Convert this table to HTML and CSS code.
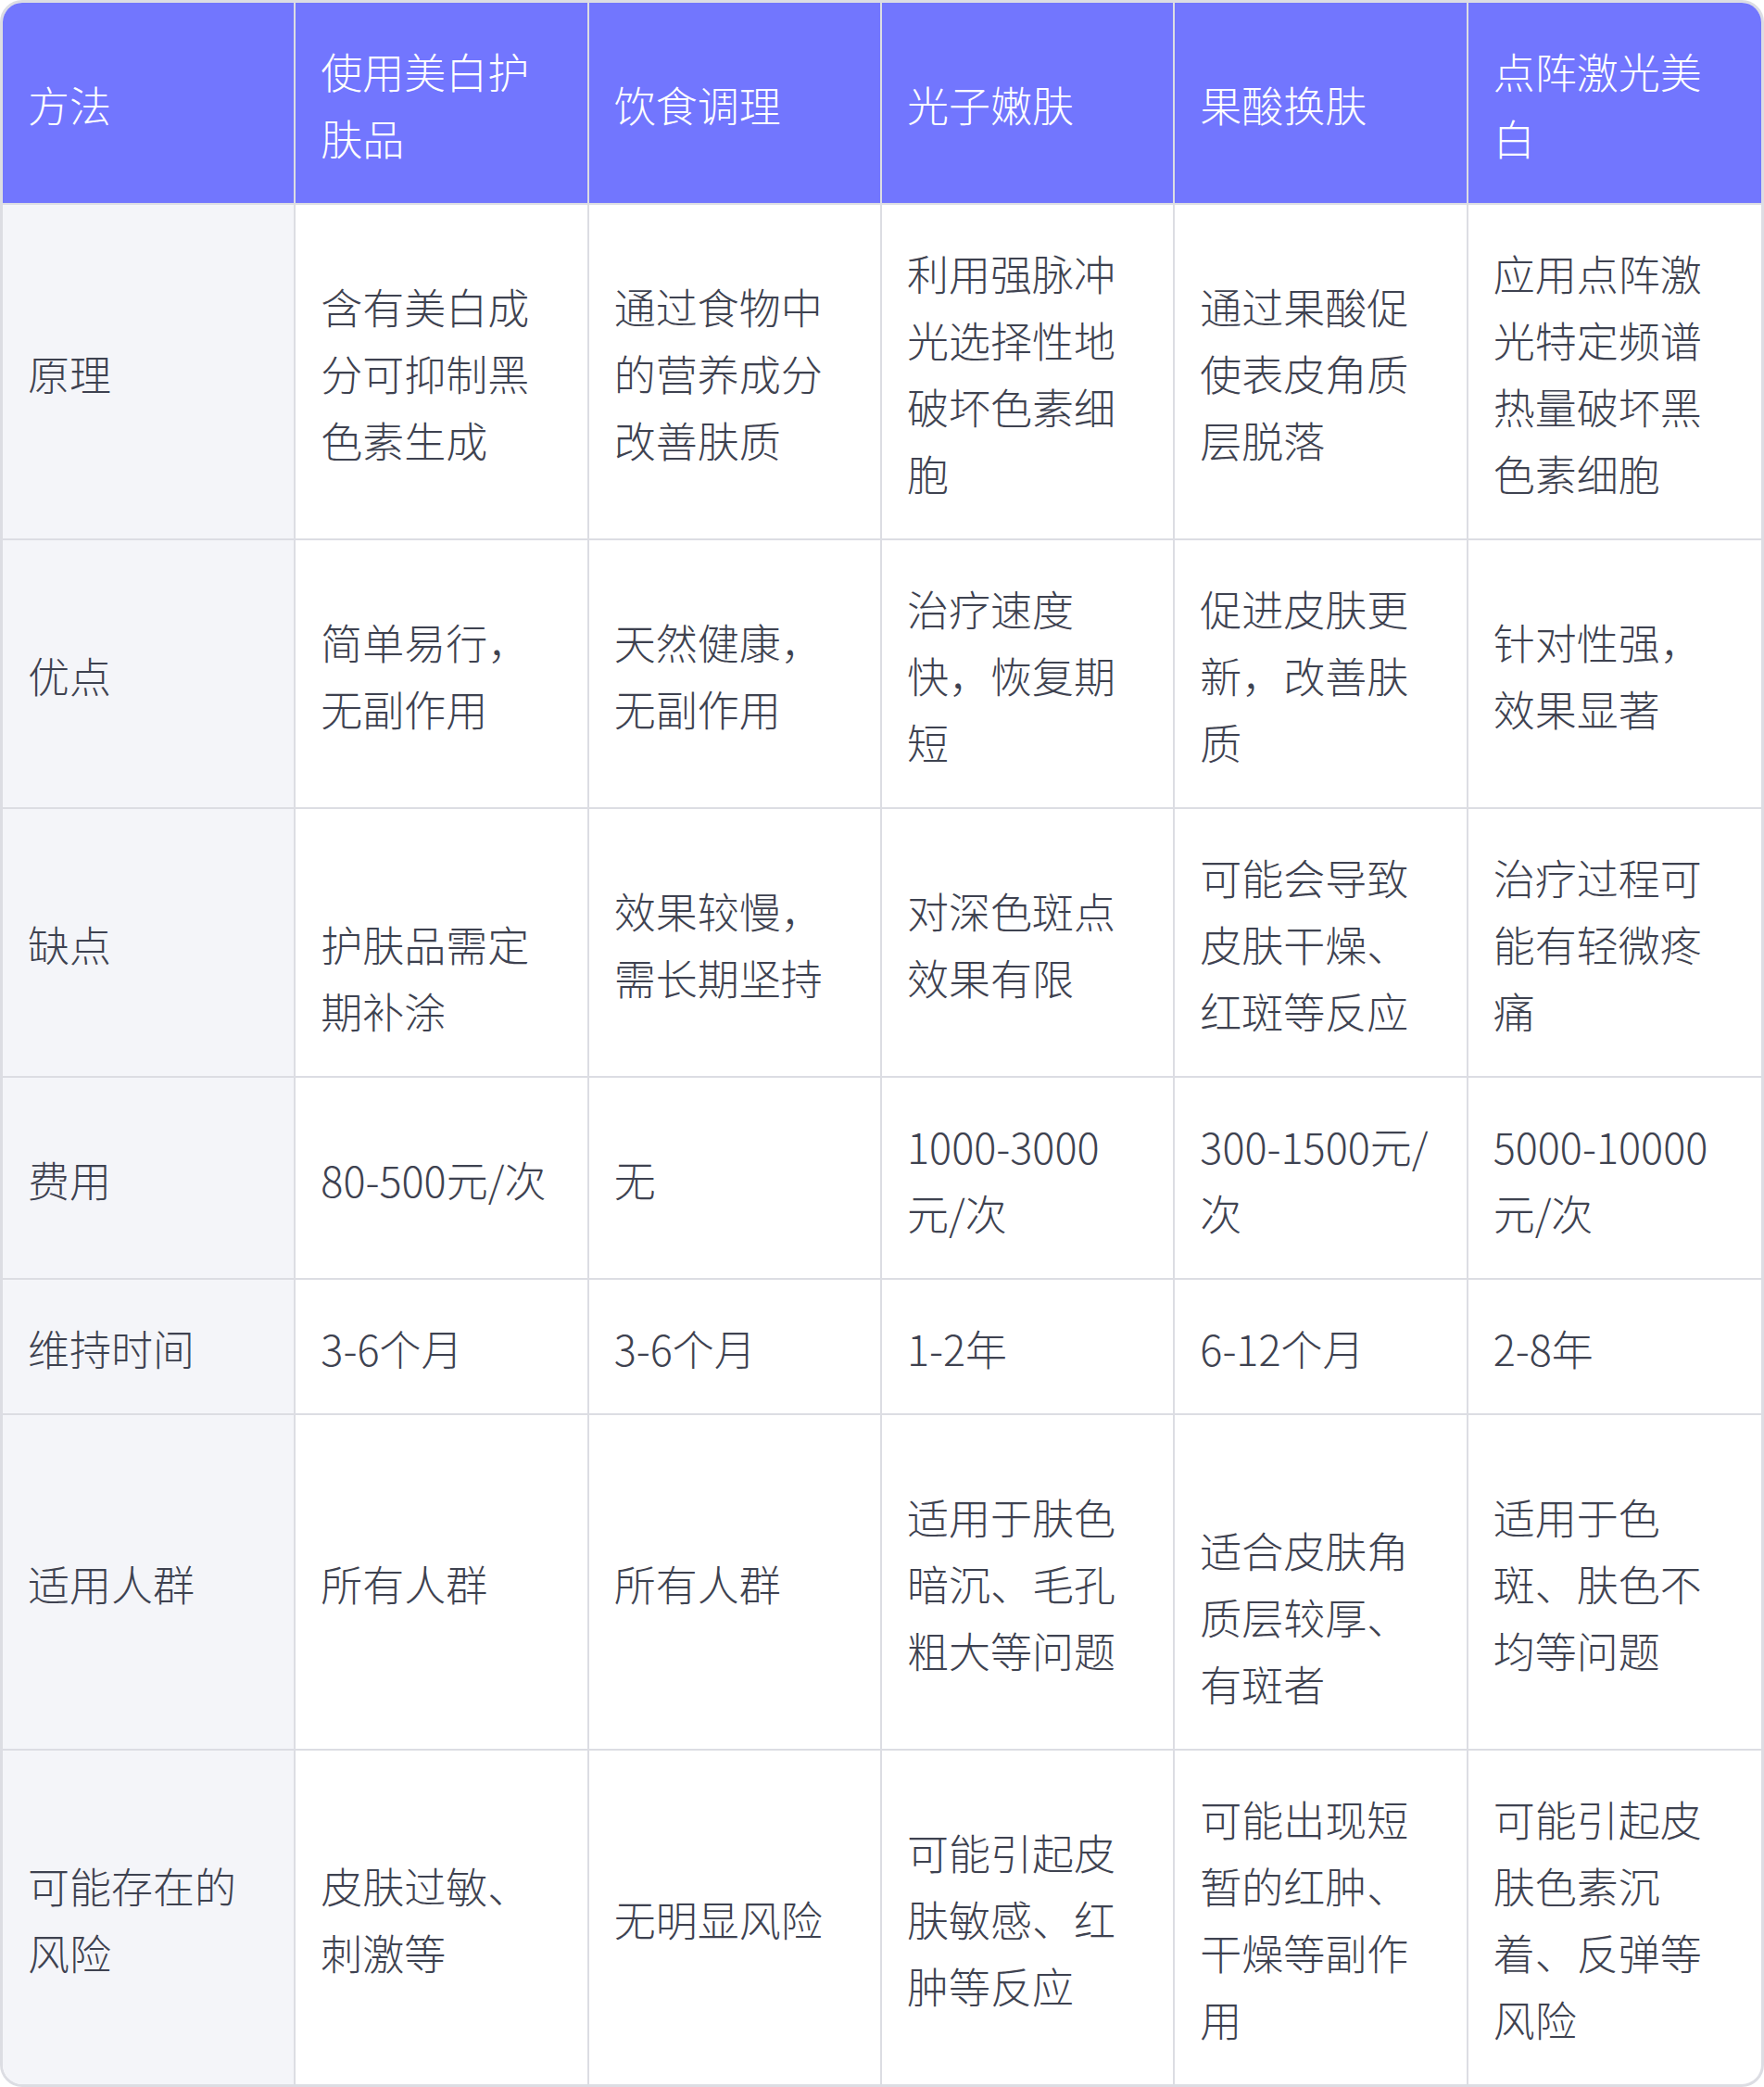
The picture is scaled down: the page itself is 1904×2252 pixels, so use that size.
FILE: index.html
```
<!DOCTYPE html>
<html lang="zh-CN">
<head>
<meta charset="utf-8">
<title>美白方法对比</title>
<link rel="stylesheet" href="styles.css">
</head>
<body>
<div class="card">
  <table class="compare">
    <thead>
      <tr>
        <th>方法</th>
        <th>使用美白护肤品</th>
        <th>饮食调理</th>
        <th>光子嫩肤</th>
        <th>果酸换肤</th>
        <th>点阵激光美白</th>
      </tr>
    </thead>
    <tbody>
      <tr>
        <td class="label">原理</td>
        <td>含有美白成分可抑制黑色素生成</td>
        <td>通过食物中的营养成分改善肤质</td>
        <td>利用强脉冲光选择性地破坏色素细胞</td>
        <td>通过果酸促使表皮角质层脱落</td>
        <td>应用点阵激光特定频谱热量破坏黑色素细胞</td>
      </tr>
      <tr>
        <td class="label">优点</td>
        <td>简单易行，无副作用</td>
        <td>天然健康，无副作用</td>
        <td>治疗速度快，恢复期短</td>
        <td>促进皮肤更新，改善肤质</td>
        <td>针对性强，效果显著</td>
      </tr>
      <tr>
        <td class="label">缺点</td>
        <td class="lead">护肤品需定期补涂</td>
        <td>效果较慢，需长期坚持</td>
        <td>对深色斑点效果有限</td>
        <td>可能会导致皮肤干燥、红斑等反应</td>
        <td>治疗过程可能有轻微疼痛</td>
      </tr>
      <tr>
        <td class="label">费用</td>
        <td>80-500元/次</td>
        <td>无</td>
        <td>1000-3000元/次</td>
        <td>300-1500元/次</td>
        <td>5000-10000元/次</td>
      </tr>
      <tr>
        <td class="label">维持时间</td>
        <td>3-6个月</td>
        <td>3-6个月</td>
        <td>1-2年</td>
        <td>6-12个月</td>
        <td>2-8年</td>
      </tr>
      <tr>
        <td class="label">适用人群</td>
        <td>所有人群</td>
        <td>所有人群</td>
        <td>适用于肤色暗沉、毛孔粗大等问题</td>
        <td class="lead">适合皮肤角质层较厚、有斑者</td>
        <td>适用于色斑、肤色不均等问题</td>
      </tr>
      <tr>
        <td class="label">可能存在的风险</td>
        <td>皮肤过敏、刺激等</td>
        <td>无明显风险</td>
        <td>可能引起皮肤敏感、红肿等反应</td>
        <td>可能出现短暂的红肿、干燥等副作用</td>
        <td>可能引起皮肤色素沉着、反弹等风险</td>
      </tr>
    </tbody>
  </table>
</div>
</body>
</html>
```

FILE: styles.css
```
html, body {
  margin: 0;
  padding: 0;
  background: #ffffff;
}

body {
  font-family: "Noto Sans CJK SC", "Noto Sans", sans-serif;
  font-weight: 300;
  color: #3e4250;
}

.card {
  border: 3px solid #dcdde3;
  border-radius: 24px;
  overflow: hidden;
  background: #ffffff;
}

.compare {
  width: 100%;
  table-layout: fixed;
  border-collapse: separate;
  border-spacing: 0;
}

.compare th,
.compare td {
  padding: 38px 33px 34px 27px;
  font-size: 45px;
  line-height: 72px;
  text-align: left;
  vertical-align: middle;
  border-right: 2px solid #dcdde3;
  border-bottom: 2px solid #dcdde3;
  word-break: normal;
}

.compare th {
  background: #7276fe;
  color: #ffffff;
  font-weight: 300;
}

.compare th:last-child,
.compare td:last-child {
  border-right: none;
}

.compare tbody tr:last-child td {
  border-bottom: none;
}

.compare td.label {
  background: #f4f5f9;
}

.compare td.lead {
  padding-top: 110px;
}
```
